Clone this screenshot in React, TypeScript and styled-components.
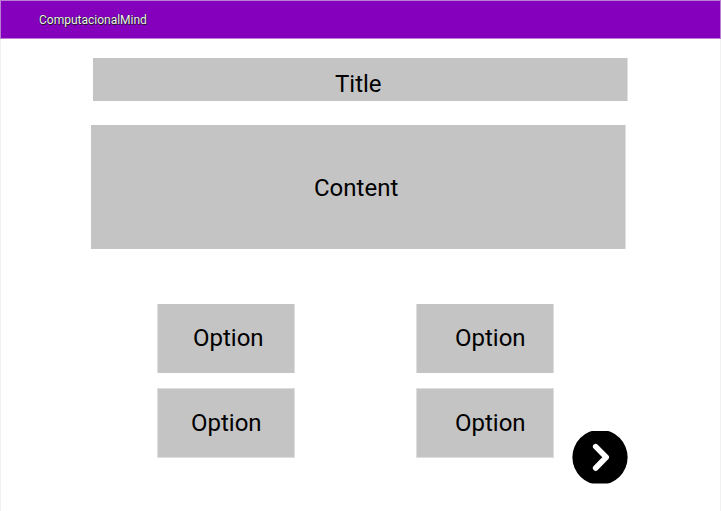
import React from "react";
import styled, { createGlobalStyle } from "styled-components";

const GlobalStyle = createGlobalStyle`
  * { box-sizing: border-box; }
  body { margin: 0; background: #fff; overflow: hidden; }
`;

const Page = styled.div`
  width: 721px;
  height: 511px;
  display: flex;
  flex-direction: column;
  border: solid #f1f1f1;
  border-width: 0 1px;
  font-family: Roboto, sans-serif;
  color: #000;
`;

const Header = styled.header`
  height: 39px;
  flex: none;
  margin: 0 -1px;
  padding-left: 38px;
  display: flex;
  align-items: center;
  background: #8500bd;
  border: 1px solid #b97fd3;
`;

const Brand = styled.span`
  font-size: 12px;
  line-height: 14px;
  color: #f4f4f4;
  text-shadow: 0 0 1px #000, 0.5px 0.5px 0.5px #222;
`;

const Banner = styled.section<{ $height: number; $left: number; $top: number; $nudge: number; $drop: number }>`
  width: 535px;
  height: ${(p) => p.$height}px;
  flex: none;
  margin: ${(p) => p.$top}px 0 0 ${(p) => p.$left}px;
  padding: ${(p) => p.$drop}px 0 0 ${(p) => p.$nudge}px;
  background: #c4c4c4;
  border-right: 1px solid #e0e0e0;
  font-size: 24px;
  line-height: 28px;
`;

const Footer = styled.div`
  display: flex;
  margin: 55px 0 0 156px;
`;

const Options = styled.div`
  display: grid;
  grid-template-columns: 138px 138px;
  grid-template-rows: 69px 70px;
  gap: 15px 121px;
`;

const Option = styled.button<{ $nudge: number; $soft?: boolean }>`
  padding: 0 0 ${(p) => (p.$soft ? 0 : 1)}px ${(p) => p.$nudge}px;
  display: flex;
  align-items: center;
  background: #c4c4c4;
  border: solid #dedede;
  border-width: ${(p) => (p.$soft ? 1 : 0)}px 1px;
  border-radius: 0;
  font: 400 24px/28px Roboto, sans-serif;
  color: #000;
`;

const Next = styled.button`
  width: 56px;
  height: 53px;
  margin: 127px 0 0 18px;
  padding: 0;
  border: 0;
  background: none;

  svg { display: block; }
`;

export default function App() {
  return (
    <>
      <GlobalStyle />
      <Page>
        <Header>
          <Brand>ComputacionalMind</Brand>
        </Header>
        <Banner $height={43} $left={92} $top={19} $nudge={242} $drop={12}>Title</Banner>
        <Banner $height={124} $left={90} $top={24} $nudge={223} $drop={49}>Content</Banner>
        <Footer>
          <Options>
            <Option $nudge={35}>Option</Option>
            <Option $nudge={38}>Option</Option>
            <Option $nudge={33} $soft>Option</Option>
            <Option $nudge={38} $soft>Option</Option>
          </Options>
          <Next aria-label="Next">
            <svg width="56" height="53" viewBox="0 0 56 53">
              <clipPath id="disc">
                <rect width="56" height="52.6" />
              </clipPath>
              <circle cx="28" cy="26.3" r="27.6" fill="#000" clipPath="url(#disc)" />
              <path
                d="M23.7 15.6 34.2 26.3 23.7 37"
                fill="none"
                stroke="#fff"
                strokeWidth="5.6"
                strokeLinecap="round"
                strokeLinejoin="round"
              />
            </svg>
          </Next>
        </Footer>
      </Page>
    </>
  );
}
